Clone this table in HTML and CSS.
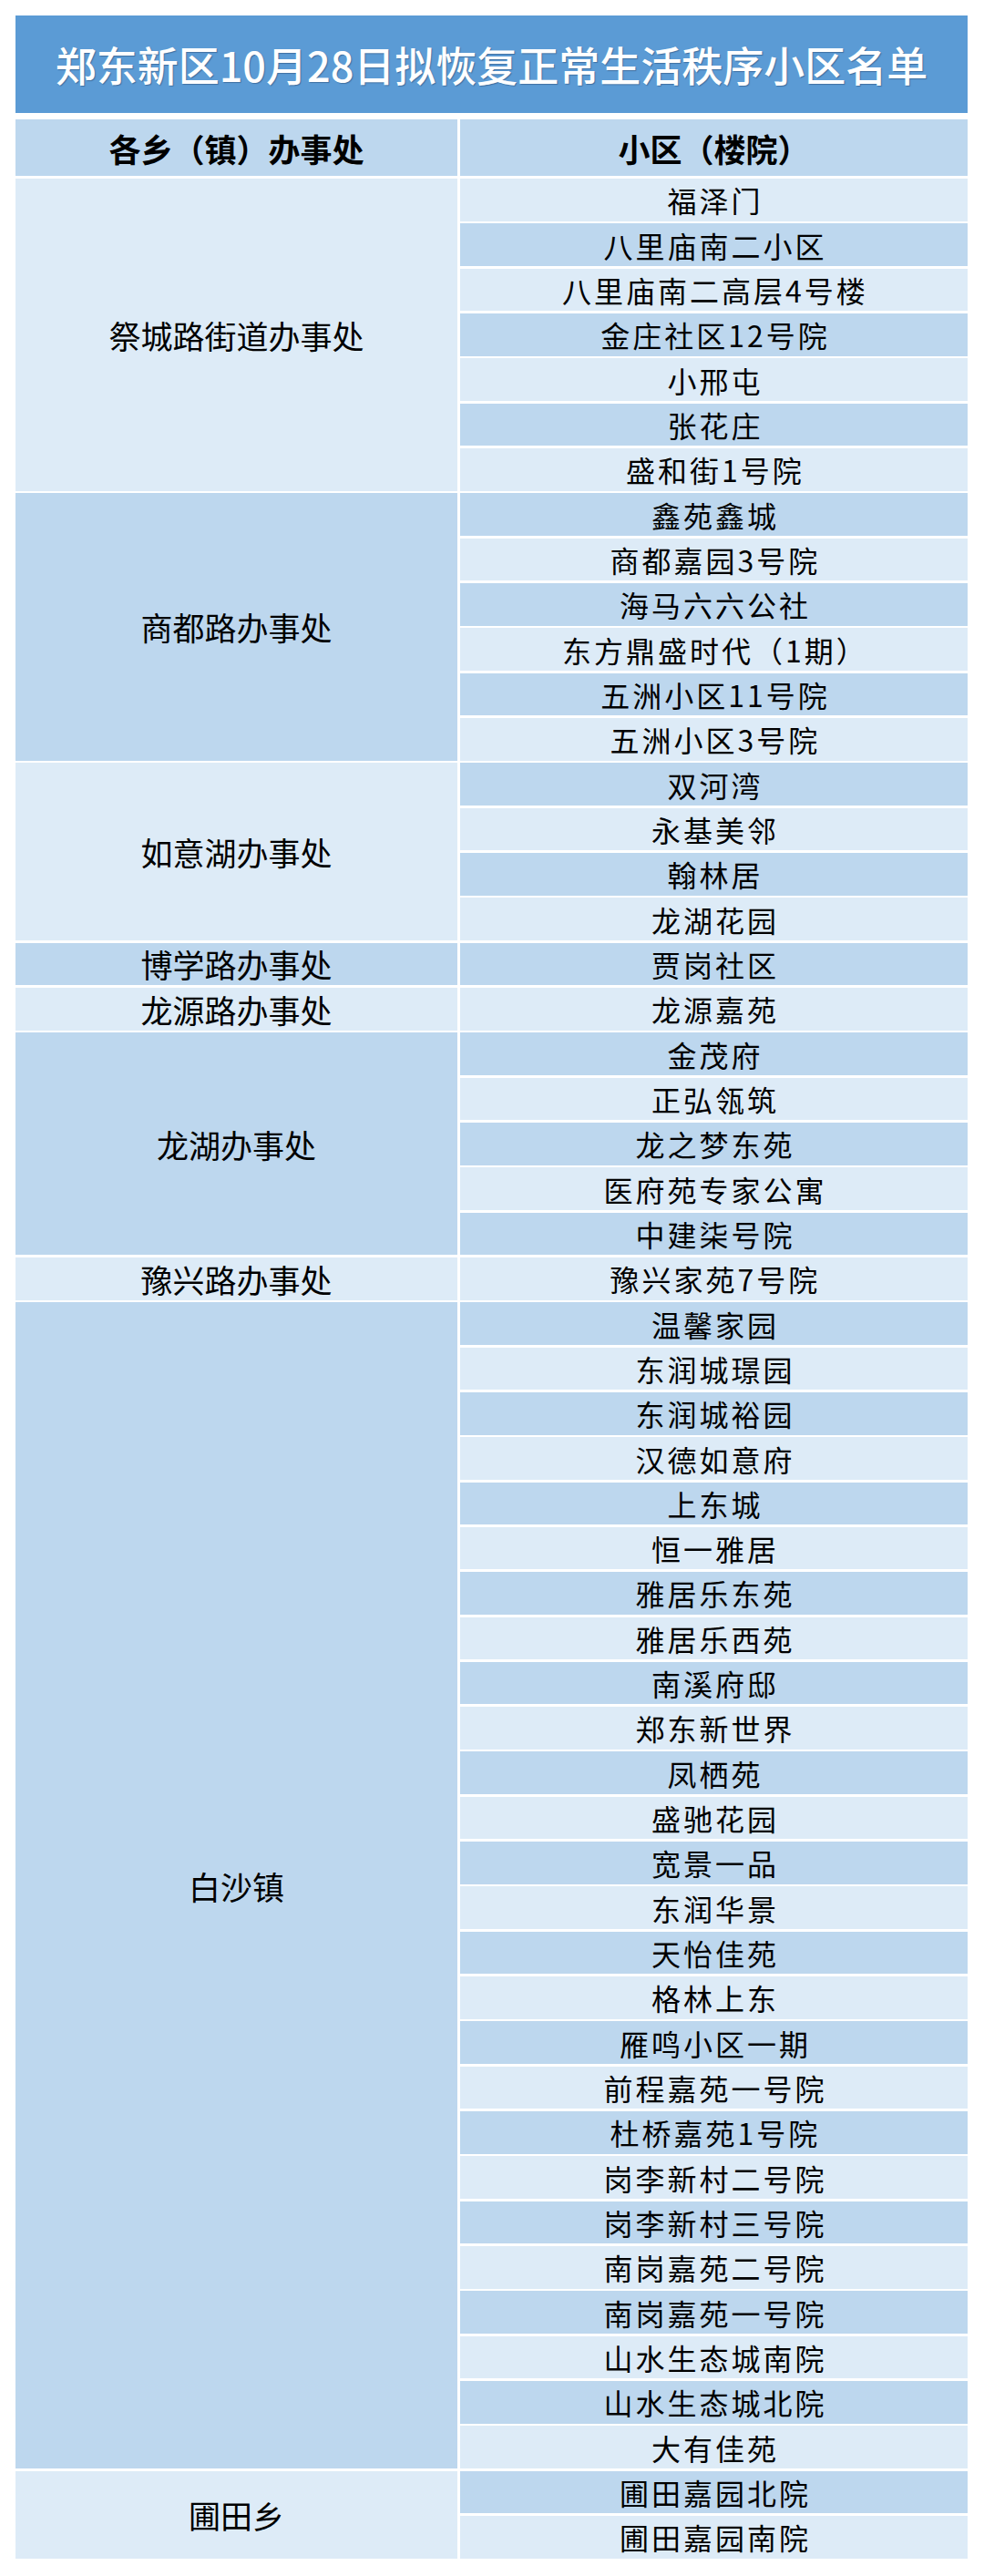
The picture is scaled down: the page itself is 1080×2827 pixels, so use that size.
FILE: index.html
```html
<!DOCTYPE html>
<html lang="zh-CN">
<head>
<meta charset="utf-8">
<title>郑东新区10月28日拟恢复正常生活秩序小区名单</title>
<link rel="stylesheet" href="styles.css">
</head>
<body>
<div class="sheet">
  <div class="title">郑东新区10月28日拟恢复正常生活秩序小区名单</div>
  <div class="head">
    <div class="hcell">各乡（镇）办事处</div>
    <div class="hcell">小区（楼院）</div>
  </div>
  <div class="table">
    <div class="group light">
      <div class="region">祭城路街道办事处</div>
      <div class="items">
        <div class="item a">福泽门</div>
        <div class="item b">八里庙南二小区</div>
        <div class="item a">八里庙南二高层4号楼</div>
        <div class="item b">金庄社区12号院</div>
        <div class="item a">小邢屯</div>
        <div class="item b">张花庄</div>
        <div class="item a">盛和街1号院</div>
      </div>
    </div>
    <div class="group dark">
      <div class="region">商都路办事处</div>
      <div class="items">
        <div class="item b">鑫苑鑫城</div>
        <div class="item a">商都嘉园3号院</div>
        <div class="item b">海马六六公社</div>
        <div class="item a">东方鼎盛时代（1期）</div>
        <div class="item b">五洲小区11号院</div>
        <div class="item a">五洲小区3号院</div>
      </div>
    </div>
    <div class="group light">
      <div class="region">如意湖办事处</div>
      <div class="items">
        <div class="item b">双河湾</div>
        <div class="item a">永基美邻</div>
        <div class="item b">翰林居</div>
        <div class="item a">龙湖花园</div>
      </div>
    </div>
    <div class="group dark">
      <div class="region">博学路办事处</div>
      <div class="items">
        <div class="item b">贾岗社区</div>
      </div>
    </div>
    <div class="group light">
      <div class="region">龙源路办事处</div>
      <div class="items">
        <div class="item a">龙源嘉苑</div>
      </div>
    </div>
    <div class="group dark">
      <div class="region">龙湖办事处</div>
      <div class="items">
        <div class="item b">金茂府</div>
        <div class="item a">正弘瓴筑</div>
        <div class="item b">龙之梦东苑</div>
        <div class="item a">医府苑专家公寓</div>
        <div class="item b">中建柒号院</div>
      </div>
    </div>
    <div class="group light">
      <div class="region">豫兴路办事处</div>
      <div class="items">
        <div class="item a">豫兴家苑7号院</div>
      </div>
    </div>
    <div class="group dark">
      <div class="region">白沙镇</div>
      <div class="items">
        <div class="item b">温馨家园</div>
        <div class="item a">东润城璟园</div>
        <div class="item b">东润城裕园</div>
        <div class="item a">汉德如意府</div>
        <div class="item b">上东城</div>
        <div class="item a">恒一雅居</div>
        <div class="item b">雅居乐东苑</div>
        <div class="item a">雅居乐西苑</div>
        <div class="item b">南溪府邸</div>
        <div class="item a">郑东新世界</div>
        <div class="item b">凤栖苑</div>
        <div class="item a">盛驰花园</div>
        <div class="item b">宽景一品</div>
        <div class="item a">东润华景</div>
        <div class="item b">天怡佳苑</div>
        <div class="item a">格林上东</div>
        <div class="item b">雁鸣小区一期</div>
        <div class="item a">前程嘉苑一号院</div>
        <div class="item b">杜桥嘉苑1号院</div>
        <div class="item a">岗李新村二号院</div>
        <div class="item b">岗李新村三号院</div>
        <div class="item a">南岗嘉苑二号院</div>
        <div class="item b">南岗嘉苑一号院</div>
        <div class="item a">山水生态城南院</div>
        <div class="item b">山水生态城北院</div>
        <div class="item a">大有佳苑</div>
      </div>
    </div>
    <div class="group light">
      <div class="region">圃田乡</div>
      <div class="items">
        <div class="item b">圃田嘉园北院</div>
        <div class="item a">圃田嘉园南院</div>
      </div>
    </div>
  </div>
</div>
</body>
</html>
```

FILE: styles.css
```css
html, body {
  margin: 0;
  padding: 0;
  background: #ffffff;
}

body {
  font-family: "Noto Sans CJK SC", "Noto Sans", sans-serif;
  color: #000000;
}

.sheet {
  width: 1045px;
  margin: 0 0 0 17px;
  padding-top: 17px;
}

.title {
  height: 107px;
  background: #5b9bd5;
  color: #ffffff;
  font-size: 45px;
  font-weight: 500;
  line-height: 1;
  display: flex;
  align-items: center;
  justify-content: center;
  text-shadow: 1px 1px 1px rgba(30, 60, 100, 0.45);
}

.head {
  margin-top: 7px;
  display: grid;
  grid-template-columns: 485px 557px;
  column-gap: 3px;
  height: 62px;
}

.hcell {
  background: #bdd7ee;
  display: flex;
  align-items: center;
  justify-content: center;
  font-size: 35px;
  font-weight: 700;
  line-height: 1;
}

.table {
  margin-top: 3px;
  display: flex;
  flex-direction: column;
  row-gap: 2.7px;
}

.group {
  display: grid;
  grid-template-columns: 485px 557px;
  column-gap: 3px;
}

.region {
  display: flex;
  align-items: center;
  justify-content: center;
  font-size: 35px;
  line-height: 1;
}

.group.light .region {
  background: #ddebf7;
}

.group.dark .region {
  background: #bdd7ee;
}

.items {
  display: flex;
  flex-direction: column;
  row-gap: 2.7px;
}

.item {
  height: 46.65px;
  display: flex;
  align-items: center;
  justify-content: center;
  font-size: 32px;
  line-height: 1;
  letter-spacing: 3px;
  text-indent: 3px;
  white-space: nowrap;
}

.item.a {
  background: #ddebf7;
}

.item.b {
  background: #bdd7ee;
}
```
